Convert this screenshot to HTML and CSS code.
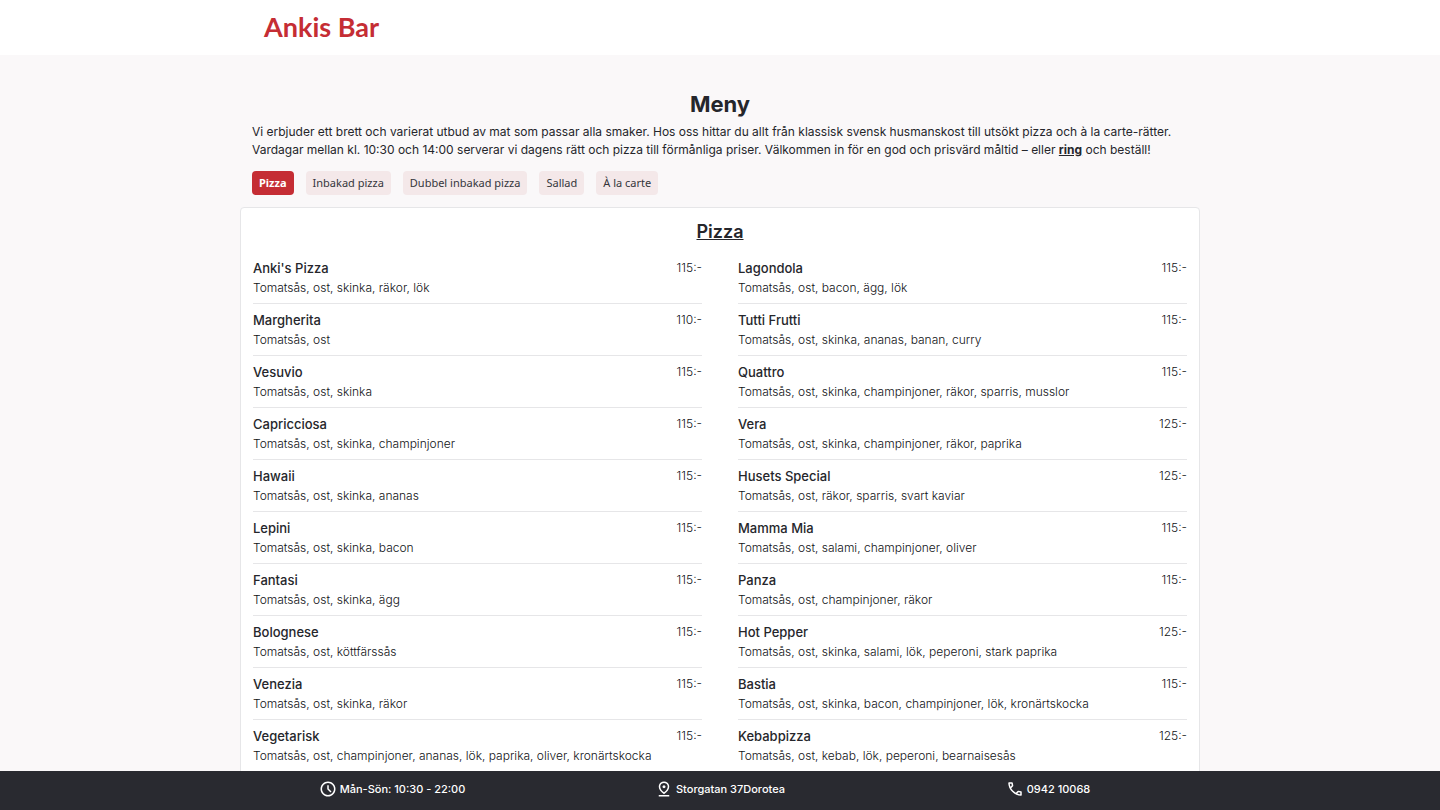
FILE: index.html
```html
<!DOCTYPE html>
<html lang="sv">
<head>
    <meta charset="UTF-8">
    <meta name="viewport" content="width=device-width, initial-scale=1.0">
    <title>Ankis Bar - Meny</title>
    <link rel="stylesheet" href="styles.css">
</head>
<body>
    <header class="site-header">
        <div class="header-inner">
            <a class="logo" href="#">Ankis Bar</a>
        </div>
    </header>

    <main class="container">
        <section class="intro">
            <h1>Meny</h1>
            <p>Vi erbjuder ett brett och varierat utbud av mat som passar alla smaker. Hos oss hittar du allt från klassisk svensk husmanskost till utsökt pizza och à la carte-rätter. Vardagar mellan kl. 10:30 och 14:00 serverar vi dagens rätt och pizza till förmånliga priser. Välkommen in för en god och prisvärd måltid – eller <a href="tel:094210068">ring</a> och beställ!</p>
            <nav class="categories">
                <button class="active" type="button">Pizza</button>
                <button type="button">Inbakad pizza</button>
                <button type="button">Dubbel inbakad pizza</button>
                <button type="button">Sallad</button>
                <button type="button">À la carte</button>
            </nav>
        </section>

        <section class="menu-card">
            <h2>Pizza</h2>
            <div class="menu-columns">
                <ul class="menu-list">
                    <li><div><h3>Anki's Pizza</h3><p>Tomatsås, ost, skinka, räkor, lök</p></div><span class="price">115:-</span></li>
                    <li><div><h3>Margherita</h3><p>Tomatsås, ost</p></div><span class="price">110:-</span></li>
                    <li><div><h3>Vesuvio</h3><p>Tomatsås, ost, skinka</p></div><span class="price">115:-</span></li>
                    <li><div><h3>Capricciosa</h3><p>Tomatsås, ost, skinka, champinjoner</p></div><span class="price">115:-</span></li>
                    <li><div><h3>Hawaii</h3><p>Tomatsås, ost, skinka, ananas</p></div><span class="price">115:-</span></li>
                    <li><div><h3>Lepini</h3><p>Tomatsås, ost, skinka, bacon</p></div><span class="price">115:-</span></li>
                    <li><div><h3>Fantasi</h3><p>Tomatsås, ost, skinka, ägg</p></div><span class="price">115:-</span></li>
                    <li><div><h3>Bolognese</h3><p>Tomatsås, ost, köttfärssås</p></div><span class="price">115:-</span></li>
                    <li><div><h3>Venezia</h3><p>Tomatsås, ost, skinka, räkor</p></div><span class="price">115:-</span></li>
                    <li><div><h3>Vegetarisk</h3><p>Tomatsås, ost, champinjoner, ananas, lök, paprika, oliver, kronärtskocka</p></div><span class="price">115:-</span></li>
                </ul>
                <ul class="menu-list">
                    <li><div><h3>Lagondola</h3><p>Tomatsås, ost, bacon, ägg, lök</p></div><span class="price">115:-</span></li>
                    <li><div><h3>Tutti Frutti</h3><p>Tomatsås, ost, skinka, ananas, banan, curry</p></div><span class="price">115:-</span></li>
                    <li><div><h3>Quattro</h3><p>Tomatsås, ost, skinka, champinjoner, räkor, sparris, musslor</p></div><span class="price">115:-</span></li>
                    <li><div><h3>Vera</h3><p>Tomatsås, ost, skinka, champinjoner, räkor, paprika</p></div><span class="price">125:-</span></li>
                    <li><div><h3>Husets Special</h3><p>Tomatsås, ost, räkor, sparris, svart kaviar</p></div><span class="price">125:-</span></li>
                    <li><div><h3>Mamma Mia</h3><p>Tomatsås, ost, salami, champinjoner, oliver</p></div><span class="price">115:-</span></li>
                    <li><div><h3>Panza</h3><p>Tomatsås, ost, champinjoner, räkor</p></div><span class="price">115:-</span></li>
                    <li><div><h3>Hot Pepper</h3><p>Tomatsås, ost, skinka, salami, lök, peperoni, stark paprika</p></div><span class="price">125:-</span></li>
                    <li><div><h3>Bastia</h3><p>Tomatsås, ost, skinka, bacon, champinjoner, lök, kronärtskocka</p></div><span class="price">115:-</span></li>
                    <li><div><h3>Kebabpizza</h3><p>Tomatsås, ost, kebab, lök, peperoni, bearnaisesås</p></div><span class="price">125:-</span></li>
                </ul>
            </div>
        </section>
    </main>

    <footer class="site-footer">
        <div class="footer-inner">
            <div class="footer-item">
                <svg viewBox="0 -960 960 960" aria-hidden="true"><path d="m612-292 56-56-148-148v-184h-80v216l172 172ZM480-80q-83 0-156-31.500T197-197q-54-54-85.500-127T80-480q0-83 31.500-156T197-763q54-54 127-85.500T480-880q83 0 156 31.500T763-763q54 54 85.500 127T880-480q0 83-31.500 156T763-197q-54 54-127 85.500T480-80Zm0-400Zm0 320q133 0 226.500-93.500T800-480q0-133-93.500-226.500T480-800q-133 0-226.500 93.500T160-480q0 133 93.500 226.500T480-160Z"/></svg>
                <span>Mån-Sön: 10:30 - 22:00</span>
            </div>
            <div class="footer-item">
                <svg viewBox="0 -960 960 960" aria-hidden="true"><path d="M480-301q99-80 149.500-154T680-594q0-56-20.500-95.500T609-754q-30-25-65-35.500T480-800q-29 0-64 10.500T351-754q-30 25-50.500 64.500T280-594q0 65 50.500 139T480-301Zm0 101Q339-304 269.500-402T200-594q0-71 25.500-124.500T291-808q40-36 90-54t99-18q49 0 99 18t90 54q40 36 65.500 89.500T760-594q0 94-69.500 192T480-200Zm0-320q33 0 56.500-23.500T560-600q0-33-23.500-56.500T480-680q-33 0-56.500 23.500T400-600q0 33 23.500 56.500T480-520ZM200-80v-80h560v80H200Zm280-520Z"/></svg>
                <span>Storgatan 37Dorotea</span>
            </div>
            <div class="footer-item">
                <svg viewBox="0 -960 960 960" aria-hidden="true"><path d="M798-120q-125 0-247-54.500T329-329Q229-429 174.500-551T120-798q0-18 12-30t30-12h162q14 0 25 9.500t13 22.500l26 140q2 16-1 27t-11 19l-97 98q20 37 47.500 71.500T387-386q31 31 65 57.500t72 48.500l94-94q9-9 23.500-13.500T670-390l138 28q14 4 23 14.500t9 23.500v162q0 18-12 30t-30 12ZM241-600l66-66-17-94h-89q5 41 14 81t26 79Zm358 358q39 17 79.500 27t81.500 13v-88l-94-19-67 67ZM241-600Zm358 358Z"/></svg>
                <span>0942 10068</span>
            </div>
        </div>
    </footer>
</body>
</html>
```
FILE: styles.css
```css
* {
    box-sizing: border-box;
}
body {
    margin: 0;
    padding-bottom: 39px;
    font-family: Inter, Arial, sans-serif;
    font-size: 12px;
    line-height: 18px;
    color: #25262b;
    background-color: #faf8f9;
}
h1, h2, h3, p, ul {
    margin: 0;
    padding: 0;
}
.site-header {
    background-color: #ffffff;
}
.header-inner {
    max-width: 960px;
    margin: 0 auto;
    padding: 7px 24px 8px;
}
.logo {
    display: inline-block;
    font-family: Lato, sans-serif;
    font-size: 27px;
    font-weight: 700;
    line-height: 40px;
    color: #c52d34;
    text-decoration: none;
    vertical-align: top;
}
.container {
    max-width: 960px;
    margin: 0 auto;
    padding-top: 35px;
}
.intro {
    padding: 0 12px 12px;
}
.intro h1 {
    font-size: 22px;
    font-weight: 700;
    line-height: 28px;
    text-align: center;
    margin-bottom: 5px;
}
.intro a {
    color: inherit;
    font-weight: 700;
}
.categories {
    display: flex;
    flex-wrap: wrap;
    gap: 12px;
    margin-top: 12px;
}
.categories button {
    padding: 3px 7px;
    border: none;
    border-radius: 4px;
    background-color: #f4e8e9;
    color: #35363b;
    font-family: "Noto Sans", sans-serif;
    font-size: 11px;
    line-height: 18px;
    cursor: pointer;
}
.categories button.active {
    background-color: #c52d34;
    color: #ffffff;
    font-weight: 700;
}
.menu-card {
    padding: 12px;
    border: 1px solid #e6e6e8;
    border-radius: 4px;
    background-color: #ffffff;
}
.menu-card h2 {
    font-size: 18px;
    font-weight: 600;
    line-height: 24px;
    text-align: center;
    text-decoration: underline;
    margin-bottom: 8px;
}
.menu-columns {
    display: grid;
    grid-template-columns: 1fr 1fr;
    gap: 36px;
}
.menu-list {
    list-style: none;
}
.menu-list li {
    display: flex;
    justify-content: space-between;
    padding: 6px 0 5px;
    border-bottom: 1px solid #e6e6e8;
}
.menu-list h3 {
    font-size: 13px;
    font-weight: 500;
    line-height: 20px;
}
.menu-list p {
    font-weight: 300;
    line-height: 20px;
    color: #111216;
}
.price {
    font-weight: 300;
    line-height: 20px;
    color: #111216;
}
.site-footer {
    position: fixed;
    left: 0;
    right: 0;
    bottom: 0;
    background-color: #292a30;
    color: #ffffff;
}
.footer-inner {
    display: grid;
    grid-template-columns: repeat(3, 1fr);
    max-width: 984px;
    margin: 0 auto;
    padding: 9px 0 12px;
}
.footer-item {
    display: flex;
    align-items: center;
    justify-content: center;
    gap: 3px;
    font-size: 11px;
    font-weight: 500;
}
.footer-item svg {
    width: 18px;
    height: 18px;
    fill: currentColor;
}
```
